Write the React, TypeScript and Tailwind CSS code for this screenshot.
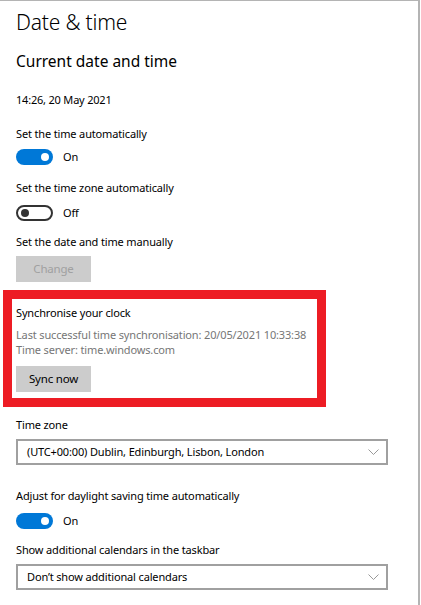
function Toggle({ on }: { on: boolean }) {
  return on ? (
    <div className="w-[37px] h-[16px] rounded-full bg-[#0078d7] flex items-center justify-end pr-[4px]">
      <div className="w-[8px] h-[8px] rounded-full bg-white" />
    </div>
  ) : (
    <div className="w-[37px] h-[16px] rounded-full border-2 border-[#333333] flex items-center pl-[3px]">
      <div className="w-[8px] h-[8px] rounded-full bg-[#333333]" />
    </div>
  );
}

function ToggleRow({ on, className }: { on: boolean; className: string }) {
  return (
    <div className={`flex items-center h-[16px] ${className}`}>
      <Toggle on={on} />
      <span className="ml-[10px] text-[11px] leading-[16px] tracking-[-0.15px]">{on ? "On" : "Off"}</span>
    </div>
  );
}

function Dropdown({ value, className }: { value: string; className: string }) {
  return (
    <div
      className={`w-[372px] h-[26px] border-2 border-[#a0a0a0] flex items-center justify-between pl-[9px] pr-[7px] ${className}`}
    >
      <span className="text-[11px] leading-[16px] tracking-[-0.15px] whitespace-nowrap">{value}</span>
      <svg width="11" height="6" viewBox="0 0 11 6" fill="none">
        <path d="M0.5 0.5 L5.5 5.5 L10.5 0.5" stroke="#999999" strokeWidth="1" />
      </svg>
    </div>
  );
}

function Label({ children, className }: { children: React.ReactNode; className: string }) {
  return (
    <div className={`text-[11px] leading-[16px] tracking-[-0.15px] whitespace-nowrap ${className}`}>{children}</div>
  );
}

export default function App() {
  return (
    <div className="w-[421px] h-[605px] bg-white" style={{ fontFamily: '"Noto Sans", "Open Sans", sans-serif' }}>
      <div className="w-[420px] h-[605px] border-t border-r-2 border-[#b4b4b4] pl-4 text-black overflow-hidden">
        <h1 className="mt-[7px] text-[21px] leading-[28px] font-light tracking-[-0.2px]">Date &amp; time</h1>
        <h2 className="mt-[15px] text-[15.5px] leading-[20px]">Current date and time</h2>
        <div className="mt-[21px] text-[11px] leading-[16px] tracking-[-0.2px]">14:26, 20 May 2021</div>

        <Label className="mt-[18px]">Set the time automatically</Label>
        <ToggleRow on className="mt-[7px]" />

        <Label className="mt-[15px]">Set the time zone automatically</Label>
        <ToggleRow on={false} className="mt-[9px]" />

        <Label className="mt-[13px]">Set the date and time manually</Label>
        <button className="mt-[6px] w-[75px] h-[26px] bg-[#cccccc] text-[#a0a0a0] text-[11.5px] leading-[16px] tracking-[-0.2px]">
          Change
        </button>

        <div className="mt-[8px] -ml-[13px] w-[323px] h-[117px] border-[9px] border-[#ed1c24] pl-[4px]">
          <Label className="mt-[6px]">Synchronise your clock</Label>
          <div className="mt-[6px] text-[11px] leading-[15px] tracking-[-0.15px] whitespace-nowrap text-[#767676]">
            <div>Last successful time synchronisation: 20/05/2021 10:33:38</div>
            <div>Time server: time.windows.com</div>
          </div>
          <button className="mt-[9px] w-[75px] h-[26px] bg-[#cccccc] text-black text-[11.5px] leading-[16px] tracking-[-0.2px]">
            Sync now
          </button>
        </div>

        <Label className="mt-[10px]">Time zone</Label>
        <Dropdown className="mt-[6px]" value="(UTC+00:00) Dublin, Edinburgh, Lisbon, London" />

        <Label className="mt-[23px]">Adjust for daylight saving time automatically</Label>
        <ToggleRow on className="mt-[9px]" />

        <Label className="mt-[13px]">Show additional calendars in the taskbar</Label>
        <Dropdown className="mt-[6px]" value="Don’t show additional calendars" />
      </div>
    </div>
  );
}
